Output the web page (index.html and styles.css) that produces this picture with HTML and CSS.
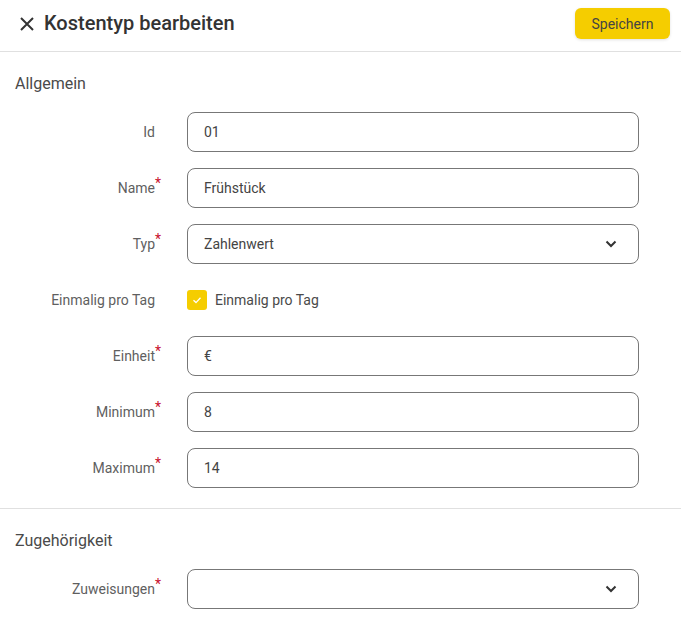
FILE: index.html
```html
<!DOCTYPE html>
<html lang="de">
<head>
<meta charset="utf-8">
<title>Kostentyp bearbeiten</title>
<link rel="stylesheet" href="styles.css">
</head>
<body>
<header class="topbar">
  <div class="topbar-title">
    <svg class="close-icon" viewBox="0 0 14 14" width="14" height="14" aria-hidden="true">
      <path d="M1 1 L13 13 M13 1 L1 13" stroke="#333" stroke-width="2" fill="none"/>
    </svg>
    <h1>Kostentyp bearbeiten</h1>
  </div>
  <button class="btn-save" type="button">Speichern</button>
</header>

<section class="form-section">
  <h2 class="section-title">Allgemein</h2>
  <div class="form-grid">
    <label class="field-label">Id</label>
    <div class="input">01</div>

    <label class="field-label required">Name</label>
    <div class="input">Frühstück</div>

    <label class="field-label required">Typ</label>
    <div class="input select">Zahlenwert
      <svg class="chevron" viewBox="0 0 12 8" width="12" height="8" aria-hidden="true"><path d="M1.5 1.5 L6 6 L10.5 1.5" stroke="#333" stroke-width="2" fill="none"/></svg>
    </div>

    <label class="field-label">Einmalig pro Tag</label>
    <div class="checkbox-row">
      <span class="checkbox">
        <svg viewBox="0 0 20 20" width="20" height="20" aria-hidden="true"><path d="M6.5 10.3 L9 12.6 L13.5 7.8" stroke="#fff" stroke-width="1.3" fill="none"/></svg>
      </span>
      <span>Einmalig pro Tag</span>
    </div>

    <label class="field-label required">Einheit</label>
    <div class="input">€</div>

    <label class="field-label required">Minimum</label>
    <div class="input">8</div>

    <label class="field-label required">Maximum</label>
    <div class="input">14</div>
  </div>
</section>

<section class="form-section">
  <h2 class="section-title">Zugehörigkeit</h2>
  <div class="form-grid">
    <label class="field-label required">Zuweisungen</label>
    <div class="input select">
      <svg class="chevron" viewBox="0 0 12 8" width="12" height="8" aria-hidden="true"><path d="M1.5 1.5 L6 6 L10.5 1.5" stroke="#333" stroke-width="2" fill="none"/></svg>
    </div>
  </div>
</section>
</body>
</html>
```

FILE: styles.css
```css
* { box-sizing: border-box; }

body {
  margin: 0;
  font-family: Roboto, "Liberation Sans", sans-serif;
  color: #333;
  background: #fff;
}

.topbar {
  display: flex;
  align-items: center;
  justify-content: space-between;
  padding: 8px 11px 12px 20px;
  border-bottom: 1px solid #e0e0e0;
}

.topbar-title {
  display: flex;
  align-items: center;
  gap: 10px;
}

.close-icon { display: block; }

.topbar-title h1 {
  margin: 0;
  font-size: 20px;
  font-weight: 500;
  color: #333;
  line-height: 31px;
}

.btn-save {
  height: 31px;
  width: 95px;
  border: none;
  border-radius: 6px;
  background: #f5cd00;
  color: #444;
  font-family: inherit;
  font-size: 14px;
  font-weight: 400;
  box-shadow: 0 1px 3px rgba(0,0,0,0.12);
}

.form-section {
  padding: 20px 42px 20px 15px;
  border-bottom: 1px solid #e0e0e0;
}
.form-section:last-child { border-bottom: none; }

.section-title {
  margin: 0 0 16px;
  font-size: 16px;
  font-weight: 400;
  line-height: 24px;
  color: #4a4a4a;
}

.form-grid {
  display: grid;
  grid-template-columns: 140px 1fr;
  column-gap: 32px;
  row-gap: 16px;
  align-items: center;
}

.field-label {
  position: relative;
  justify-self: end;
  font-size: 14px;
  color: #5f5f5f;
}

.field-label.required::after {
  content: "*";
  position: absolute;
  left: 100%;
  top: -5px;
  color: #c8102e;
  font-size: 14px;
}

.input {
  position: relative;
  height: 40px;
  border: 1px solid #777;
  border-radius: 8px;
  padding: 0 16px;
  display: flex;
  align-items: center;
  font-size: 14px;
  color: #444;
}

.chevron {
  position: absolute;
  right: 21px;
  top: 15px;
}

.checkbox-row {
  height: 40px;
  display: flex;
  align-items: center;
  gap: 8px;
  font-size: 14px;
  color: #4a4a4a;
}

.checkbox {
  width: 20px;
  height: 20px;
  border-radius: 3px;
  background: #f5cd00;
  display: block;
}
.checkbox svg { display: block; }
```
